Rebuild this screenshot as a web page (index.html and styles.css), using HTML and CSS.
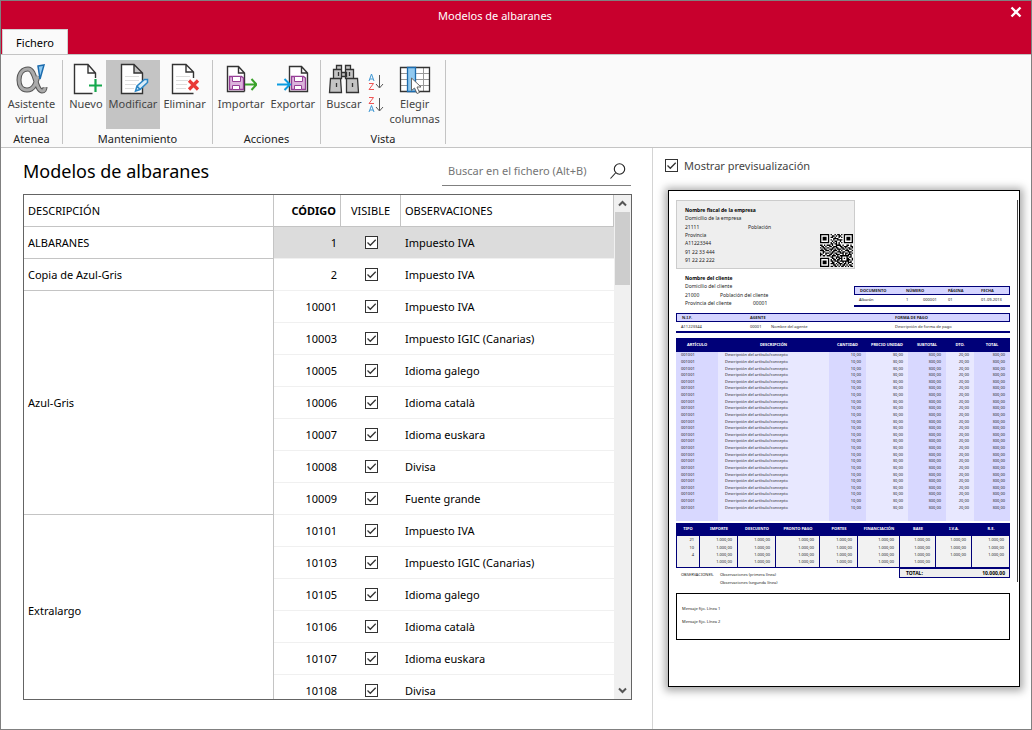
FILE: index.html
```
<!DOCTYPE html>
<html lang="es">
<head>
<meta charset="utf-8">
<title>Modelos de albaranes</title>
<link rel="stylesheet" href="styles.css">
</head>
<body>
<div class="window">
  <header class="titlebar">
    <h1 class="window-title">Modelos de albaranes</h1>
    <button class="close" aria-label="Cerrar"><svg width="12" height="12" viewBox="0 0 12 12"><path d="M1.500 1.500 10.500 10.500M10.500 1.500 1.500 10.500" stroke="#fff" stroke-width="2.300"/></svg></button>
    <button class="tab">Fichero</button>
  </header>

  <nav class="ribbon">
    <section class="group g-atenea">
      <div class="tools">
        <button class="tool">
          <svg width="32" height="32" viewBox="0 0 32 32" fill="none"><path d="M22 13C20 20 18 27 11 27 5 27 3 22 3 17 3 10 7 6 12 6 20 6 19 27 26 28 28 28 29 26 29 24" stroke="#555" stroke-width="5"/><path d="M22 13C20 20 18 27 11 27 5 27 3 22 3 17 3 10 7 6 12 6 20 6 19 27 26 28 28 28 29 26 29 24" stroke="#aaa" stroke-width="3"/><path d="M22 3 28 2 24 16Z" fill="#8fcaf2" stroke="#1c6cae" stroke-width="1.500"/></svg>
          <span>Asistente<br>virtual</span>
        </button>
      </div>
      <h2 class="group-name">Atenea</h2>
    </section>
    <section class="group g-mant">
      <div class="tools">
        <button class="tool">
          <svg width="32" height="32" viewBox="0 0 32 32" fill="none"><path d="M22.500 30.500H4.500V1.500H18L25.500 10V15M18 1.500V10H25.500" fill="#fff" stroke="#333" stroke-width="1.400"/><path d="M25.500 16V29M19 22.500H32" stroke="#14a84c" stroke-width="2.200"/></svg>
          <span>Nuevo</span>
        </button>
        <button class="tool active">
          <svg width="32" height="32" viewBox="0 0 32 32" fill="none"><path d="M25.500 15V30.500H4.500V1.500H17L25.500 10V15M17 1.500V10H25.500" fill="#fff" stroke="#333" stroke-width="1.400"/><path d="M8 13.500H22M8 17.500H22M8 21.500H19M8 25.500H17" stroke="#ddd"/><path d="M18.500 28 20 23 27.500 16.500 30.500 16.500 30.500 19.500 23 26.500ZM20 23 23 26.500" fill="#d9ecf9" stroke="#2b86c5" stroke-width="1.500"/></svg>
          <span>Modificar</span>
        </button>
        <button class="tool">
          <svg width="32" height="32" viewBox="0 0 32 32" fill="none"><path d="M24.500 30.500H3.500V1.500H17L24.500 9V15M17 1.500V9H24.500" fill="#fff" stroke="#333" stroke-width="1.400"/><path d="M7 13.500H21M7 17.500H19M7 21.500H18M7 25.500H17" stroke="#ddd"/><path d="M20 17.500 29 26.500M29 17.500 20 26.500" stroke="#e93a36" stroke-width="3.200"/></svg>
          <span>Eliminar</span>
        </button>
      </div>
      <h2 class="group-name">Mantenimiento</h2>
    </section>
    <section class="group g-acc">
      <div class="tools">
        <button class="tool">
          <svg width="32" height="32" viewBox="0 0 32 32" fill="none"><path d="M19.500 28.500H2.500V3.500H13.500L19.500 10V28.500M13.500 3.500V10H19.500" fill="#fff" stroke="#333" stroke-width="1.400"/><path d="M4.500 13.500H16.500L18.500 15V26.500H4.500Z" fill="#dcb4dc" stroke="#963f96" stroke-width="1.300"/><path d="M7.500 13.500H15.500V18.500H7.500ZM7.500 22.500H14.500V26.500H7.500Z" fill="#fff" stroke="#963f96"/><path d="M20 21.500H31M26.500 16 31.500 21.500 26.500 27" stroke="#3aa22a" stroke-width="2"/></svg>
          <span>Importar</span>
        </button>
        <button class="tool">
          <svg width="32" height="32" viewBox="0 0 32 32" fill="none"><path d="M12.500 28.500V3.500H24.500L30.500 10V28.500ZM24.500 3.500V10H30.500" fill="#fff" stroke="#333" stroke-width="1.400"/><path d="M14.500 13.500H26.500L28.500 15V26.500H14.500Z" fill="#dcb4dc" stroke="#963f96" stroke-width="1.300"/><path d="M17.500 13.500H25.500V18.500H17.500ZM17.500 22.500H24.500V26.500H17.500Z" fill="#fff" stroke="#963f96"/><path d="M0 21.500H12M7.500 16 13 21.500 7.500 27" stroke="#0c9ce0" stroke-width="2"/></svg>
          <span>Exportar</span>
        </button>
      </div>
      <h2 class="group-name">Acciones</h2>
    </section>
    <section class="group g-vista">
      <div class="tools">
        <button class="tool">
          <svg width="32" height="32" viewBox="0 0 32 32" fill="#c4c4c4" stroke="#333" stroke-width="1.300"><path d="M8.500 2.500H13.500V6.500H8.500ZM17.500 2.500H22.500V6.500H17.500ZM13.500 9.500H18.500V13.500H13.500ZM5.500 6.500H13.500V15.500H5.500ZM17.500 6.500H25.500V15.500H17.500ZM2.500 15.500H12.500L13.500 29.500H1.500ZM18.500 15.500H29.500L30.500 29.500H18.500Z"/><path d="M10.500 9V13M21.500 9V13M8.500 20V24M24.500 20V24"/></svg>
          <span>Buscar</span>
        </button>
        <div class="sorts">
          <button class="sort" aria-label="Orden ascendente"><svg width="16" height="18" viewBox="0 0 16 18" fill="none"><path d="M1 8 3.500 1 6 8M2 6H5" stroke="#3f97d3"/><path d="M1 10.500H5.500L1 16.500H6" stroke="#ee5555"/><path d="M11.500 2V14.500M8 11 11.500 15 15 11" stroke="#555"/></svg></button>
          <button class="sort" aria-label="Orden descendente"><svg width="16" height="18" viewBox="0 0 16 18" fill="none"><path d="M1 1.500H5.500L1 7.500H6" stroke="#ee5555"/><path d="M1 16 3.500 9.500 6 16M2 14H5" stroke="#3f97d3"/><path d="M11.500 2V14.500M8 11 11.500 15 15 11" stroke="#555"/></svg></button>
        </div>
        <button class="tool">
          <svg width="32" height="32" viewBox="0 0 32 32" fill="none"><path d="M1.500 4.500H30.500V28.500H1.500Z" fill="#fff"/><path d="M1.500 10.500H30.500M1.500 16.500H30.500M1.500 22.500H30.500M24.500 4.500V28.500" stroke="#999"/><path d="M1.500 4.500H30.500V28.500H1.500Z" stroke="#333" stroke-width="1.300"/><path d="M8.500 4.500H16.500V28.500H8.500Z" fill="#91c9ef" stroke="#1c6cae" stroke-width="1.300"/><path d="M12.500 15 V27.500L15.500 25 18 30.500 20.500 29.500 18 24H22Z" fill="#fff" stroke="#666"/></svg>
          <span>Elegir<br>columnas</span>
        </button>
      </div>
      <h2 class="group-name">Vista</h2>
    </section>
  </nav>

  <main class="main">
    <section class="list">
      <div class="list-head">
        <h2 class="list-title">Modelos de albaranes</h2>
        <label class="search">
          <input type="text" placeholder="Buscar en el fichero (Alt+B)" aria-label="Buscar en el fichero">
          <svg width="16" height="16" viewBox="0 0 16 16" fill="none" stroke="#222" stroke-width="1.100"><circle cx="9.500" cy="6" r="5.200"/><path d="M5.500 10 .5 15.500"/></svg>
        </label>
      </div>
      <div class="grid-box">
        <div class="grid-scroll">
          <table class="grid">
            <colgroup><col class="c-desc"><col class="c-code"><col class="c-vis"><col></colgroup>
            <thead><tr><th>DESCRIPCIÓN</th><th class="code sorted">CÓDIGO</th><th class="vis">VISIBLE</th><th>OBSERVACIONES</th></tr></thead>
            <tbody id="models"></tbody>
          </table>
        </div>
        <div class="scrollbar">
          <button aria-label="Subir"><svg width="9" height="7" viewBox="0 0 9 7"><path d="M1 5.500 4.500 2 8 5.500" fill="none" stroke="#555" stroke-width="2"/></svg></button>
          <div class="track"><div class="thumb"></div></div>
          <button aria-label="Bajar"><svg width="9" height="7" viewBox="0 0 9 7"><path d="M1 1.500 4.500 5 8 1.500" fill="none" stroke="#555" stroke-width="2"/></svg></button>
        </div>
      </div>
    </section>

    <aside class="preview">
      <label class="show"><input type="checkbox" class="check" checked>Mostrar previsualización</label>
      <article class="sheet">
        <div class="company">
          <div class="lines">
            <b>Nombre fiscal de la empresa</b>
            <span>Domicilio de la empresa</span>
            <span class="pair"><i>21111</i><i>Población</i></span>
            <span>Provincia</span><span>A11223344</span><span>91 22 33 444</span><span>91 22 22 222</span>
          </div>
          <svg class="qr" id="qr" width="33" height="33" viewBox="0 0 25 25"></svg>
        </div>
        <div class="second">
          <div class="lines client">
            <b>Nombre del cliente</b>
            <span>Domicilio del cliente</span>
            <span class="pair near"><i>21000</i><i>Población del cliente</i></span>
            <span class="pair far"><i>Provincia del cliente</i><i>00001</i></span>
          </div>
          <table class="strip doc">
            <colgroup><col class="d1"><col class="d2"><col class="d3"><col class="d4"><col></colgroup>
            <thead><tr><th>DOCUMENTO</th><th colspan="2">NÚMERO</th><th>PÁGINA</th><th>FECHA</th></tr></thead>
            <tbody><tr><td>Albarán</td><td>1</td><td>000001</td><td>01</td><td>01-09-2013</td></tr></tbody>
          </table>
        </div>
        <table class="strip agent">
          <colgroup><col class="a1"><col class="a2"><col class="a3"><col></colgroup>
          <thead><tr><th>N.I.F.</th><th colspan="2">AGENTE</th><th>FORMA DE PAGO</th></tr></thead>
          <tbody><tr><td>A11223344</td><td>00001</td><td>Nombre del agente</td><td>Descripción de forma de pago</td></tr></tbody>
        </table>
        <table class="items">
          <colgroup><col class="i1"><col class="i2"><col class="i3"><col class="i4"><col class="i5"><col class="i6"><col class="i7"></colgroup>
          <thead><tr><th>ARTÍCULO</th><th>DESCRIPCIÓN</th><th>CANTIDAD</th><th>PRECIO UNIDAD</th><th>SUBTOTAL</th><th>DTO.</th><th>TOTAL</th></tr></thead>
          <tbody id="items"></tbody>
        </table>
        <table class="taxes">
          <colgroup><col class="t1"><col class="t2"><col class="t2"><col class="t4"><col class="t2"><col class="t6"><col class="t7"><col class="t7"><col></colgroup>
          <thead><tr><th>TIPO</th><th>IMPORTE</th><th>DESCUENTO</th><th>PRONTO PAGO</th><th>PORTES</th><th>FINANCIACIÓN</th><th>BASE</th><th>I.V.A.</th><th>R.E.</th></tr></thead>
          <tbody id="taxes"></tbody>
        </table>
        <div class="foot">
          <div class="obs"><span>OBSERVACIONES.</span><span>Observaciones (primera línea)<br>Observaciones (segunda línea)</span></div>
          <div class="total"><b>TOTAL:</b><b>10.000,00</b></div>
        </div>
        <div class="message"><span>Mensaje fijo. Línea 1</span><span>Mensaje fijo. Línea 2</span></div>
        <div class="edge"></div>
      </article>
    </aside>
  </main>
</div>
<script src="app.js"></script>
</body>
</html>
```
FILE: styles.css
```
* { box-sizing: border-box; }
body { margin: 0; font: 11px/15px "Noto Sans", sans-serif; color: #000; }
h1, h2 { margin: 0; font-weight: 400; }
button { border: 0; padding: 0; background: none; font: inherit; color: inherit; }
svg { display: block; }
table { border-collapse: separate; border-spacing: 0; table-layout: fixed; width: 100%; }
th, td { padding: 0; text-align: left; font-weight: 400; }
i { font-style: normal; }

.window { height: 100vh; display: flex; flex-direction: column; border: 1px solid #808080; background: #fff; }
.titlebar { display: grid; grid-template: 28px 25px / 90px 1fr 132px; background: #c8002d; flex: none; }
.window-title { grid-column: 2; font-size: 11px; line-height: 30px; color: #fff; text-align: center; }
.close { justify-self: end; align-self: start; margin: 5px 9px; }
.tab { grid-row: 2; grid-column: 1; width: 66px; margin-left: 1px; border: 1px solid #d0d0d0; border-bottom: 0; background: #fafafa; }

.ribbon { display: flex; flex: none; height: 94px; padding: 5px 0 3px; background: #fafafa; border-top: 1px solid #c4c4c4; border-bottom: 1px solid #c4c4c4; }
.group { display: flex; flex-direction: column; border-right: 1px solid #c4c4c4; }
.g-atenea { width: 62px; }
.g-mant { width: 150px; }
.g-acc { width: 108px; }
.g-vista { width: 125px; }
.tools { display: flex; justify-content: center; }
.tool { display: flex; flex-direction: column; align-items: center; height: 69px; padding: 3px 3px 0; color: #444; }
.tool span { margin-top: 1px; }
.tool.active { background: #c4c4c4; }
.group-name { margin-top: 4px; font-size: 11px; line-height: 12px; text-align: center; color: #222; }
.sorts { display: flex; flex-direction: column; gap: 5px; padding: 13px 3px 0; }

.main { flex: 1; min-height: 0; display: flex; }
.list { flex: 1; min-width: 0; display: flex; flex-direction: column; padding: 8px 20px 29px 22px; border-right: 1px solid #d4d4d4; }
.list-head { display: flex; justify-content: space-between; height: 38px; padding-right: 1px; flex: none; }
.list-title { font-size: 18px; line-height: 31px; }
.search { display: flex; align-items: center; justify-content: space-between; width: 189px; height: 30px; padding: 0 5px 0 6px; border-bottom: 1px solid #808080; }
.search input { width: 150px; border: 0; padding: 0; outline: 0; background: none; font: inherit; }
.search input::placeholder { color: #757575; opacity: 1; }
.grid-box { flex: 1; min-height: 0; display: flex; border: 1px solid #646464; }
.grid-scroll { flex: 1; min-width: 0; overflow: hidden; }
.grid .c-desc { width: 250px; }
.grid .c-code { width: 67px; }
.grid .c-vis { width: 60px; }
.grid th, .grid td { height: 32px; padding: 0 4px; border-bottom: 1px solid #f0f0f0; vertical-align: middle; }
.grid th { border-right: 1px solid #c4c4c4; border-bottom-color: #c4c4c4; }
.grid .desc { border-right: 1px solid #c4c4c4; border-bottom-color: #c4c4c4; background: #fff; }
.grid .code { text-align: right; }
.grid th.sorted { font-weight: 700; }
.grid .vis { text-align: center; }
.grid .selected td:not(.desc) { background: #dcdcdc; }
.check { appearance: none; display: block; width: 13px; height: 13px; margin: 0 auto; border: 1px solid #333; background: #fff url("data:image/svg+xml,%3Csvg xmlns='http://www.w3.org/2000/svg' viewBox='0 0 11 11'%3E%3Cpath d='M1.500 5.500 4.300 8.300 9.700 2.800' fill='none' stroke='%23333' stroke-width='1.300'/%3E%3C/svg%3E"); }
.scrollbar { width: 17px; display: flex; flex-direction: column; background: #f0f0f0; }
.scrollbar button { height: 17px; display: grid; place-items: center; }
.track { flex: 1; }
.thumb { height: 73px; margin: 0 1px; background: #cdcdcd; }

.preview { width: 378px; padding: 9px 11px 0 12px; display: flex; flex-direction: column; }
.show { display: flex; align-items: center; gap: 6px; height: 17px; color: #444; }
.show .check { margin: 0; }
.sheet { position: relative; height: 497px; margin: 16px 0 0 3px; padding: 9px 9px 0 7px; border: 1px solid #000; background: #fff; box-shadow: 0 1px 8px 3px #aaa; font-size: 4px; line-height: 8px; color: #222; }
.edge { position: absolute; top: 9px; bottom: 104px; right: 1px; border-right: 1px solid #444; }
.company { display: flex; justify-content: space-between; align-items: end; width: 179px; height: 69px; padding: 5px 1px 1px 8px; background: #eee; border: 1px solid #ccc; }
.lines { display: flex; flex-direction: column; justify-content: space-between; align-self: start; height: 58px; font-size: 5px; white-space: nowrap; }
.lines.client { height: 33px; }
.lines b { color: #000; }
.pair { display: grid; grid-template-columns: 63px auto; }
.pair.near { grid-template-columns: 35px auto; }
.pair.far { grid-template-columns: 68px auto; }
.second { display: flex; justify-content: space-between; height: 44px; padding: 5px 0 0 9px; }
.strip { border-bottom: 2px solid #000078; }
.strip th { height: 9px; padding-left: 5px; line-height: 6px; background: #d4d4ff; border: solid #000078; border-width: 1px 0; font-weight: 700; white-space: nowrap; }
.strip th:first-child { border-left-width: 1px; }
.strip th:last-child { border-right-width: 1px; }
.strip td { height: 9px; padding-left: 5px; white-space: nowrap; }
.doc { width: 156px; height: 21px; margin-top: 12px; }
.d1 { width: 47px; } .d2 { width: 17px; } .d3 { width: 25px; } .d4 { width: 33px; }
.a1 { width: 69px; } .a2 { width: 21px; } .a3 { width: 124px; }
.items { height: 183px; margin-top: 5px; }
.items th, .taxes th { height: 12px; line-height: 6px; text-align: center; background: #000078; color: #fff; font-weight: 700; white-space: nowrap; }
.items th { height: 14px; }
.items td { text-align: right; padding-right: 5px; line-height: 6px; background: #d8d8ff; }
.items td:nth-child(even) { background: #e8e8ff; }
.items td:nth-child(-n+2) { text-align: left; padding-left: 5px; }
.items td:nth-child(2) { padding-left: 7px; }
.items .filler td { height: 10px; }
.i1 { width: 42px; } .i2 { width: 111px; } .i3 { width: 37px; } .i4 { width: 42px; } .i5 { width: 38px; } .i6 { width: 28px; } .i7 { width: 36px; }
.taxes { margin-top: 2px; }
.taxes td { height: 7px; padding-right: 5px; line-height: 6px; text-align: right; background: #f2f2f2; border-right: 1px solid #000078; }
.taxes td:first-child { border-left: 1px solid #000078; }
.taxes tbody tr:first-child td { height: 9px; border-top: 1px solid #000078; }
.taxes tbody tr:last-child td { height: 10px; padding-bottom: 2px; border-bottom: 1px solid #000078; }
.t1 { width: 24px; } .t2 { width: 38px; } .t4 { width: 44px; } .t6 { width: 42px; } .t7 { width: 36px; }
.foot { display: flex; justify-content: space-between; align-items: start; height: 25px; }
.obs { display: flex; gap: 6px; padding: 3px 0 0 5px; white-space: nowrap; }
.total { display: flex; justify-content: space-between; width: 111px; padding: 0 4px 0 6px; border: 1px solid #000078; background: #eee; font-size: 5px; color: #000; }
.message { height: 47px; padding: 11px 5px; display: flex; flex-direction: column; gap: 5px; border: 1px solid #000; }
```
FILE: app.js
```
const notes = ["Impuesto IVA", "Impuesto IGIC (Canarias)", "Idioma galego", "Idioma català", "Idioma euskara", "Divisa", "Fuente grande"];
const groups = [
  ["ALBARANES", [["1", notes[0]]]],
  ["Copia de Azul-Gris", [["2", notes[0]]]],
  ["Azul-Gris", ["10001", "10003", "10005", "10006", "10007", "10008", "10009"].map((c, i) => [c, notes[i]])],
  ["Extralargo", ["10101", "10103", "10105", "10106", "10107", "10108"].map((c, i) => [c, notes[i]])]
];
document.getElementById("models").innerHTML = groups.map(([name, rows]) => rows.map(([code, note], i) =>
  `<tr class="${code === "1" ? "selected" : ""}">${i ? "" : `<td class="desc" rowspan="${rows.length}">${name}</td>`}<td class="code">${code}</td><td class="vis"><input type="checkbox" class="check" checked aria-label="Visible ${code}"></td><td>${note}</td></tr>`).join("")).join("");

const cells = list => "<tr>" + list.map(v => `<td>${v}</td>`).join("") + "</tr>";
document.getElementById("items").innerHTML =
  cells(["001001", "Descripción del artículo/concepto", "10,00", "30,00", "300,00", "20,00", "300,00"]).repeat(24) +
  `<tr class="filler">${"<td></td>".repeat(7)}</tr>`;
const m = "1.000,00";
document.getElementById("taxes").innerHTML =
  ["21", "10", "4"].map(t => cells([t, m, m, m, m, m, m, m, m])).join("") + cells(["", m, m, m, m, m, m, "", ""]);

const code = [
  "1111111010010110101111111", "1000001001101011001000001", "1011101011010010101011101",
  "1011101000111100001011101", "1011101010100111101011101", "1000001001011001001000001",
  "1111111010101010101111111", "0000000011011010000000000", "1101011101001111010011010",
  "0110100110111001101110011", "1011011001101100110101101", "0101100111010111011010110",
  "1110111010111010100111001", "0011000101100111011001110", "1010111011011001110110101",
  "1100100110101110010101110", "1011011101110101111111010", "0000000011001110100010110",
  "1111111001101011101011001", "1000001010110110100011101", "1011101011011101111111010",
  "1011101001100110010101110", "1011101011101011101101001", "1000001000110101011010110",
  "1111111011011010110101011"
];
const d = code.map((row, y) => [...row].map((v, x) => v === "1" ? `M${x} ${y}h1v1h-1z` : "").join("")).join("");
document.getElementById("qr").innerHTML = `<path fill="#fff" d="M0 0h25v25H0z"/><path d="${d}"/>`;
```
